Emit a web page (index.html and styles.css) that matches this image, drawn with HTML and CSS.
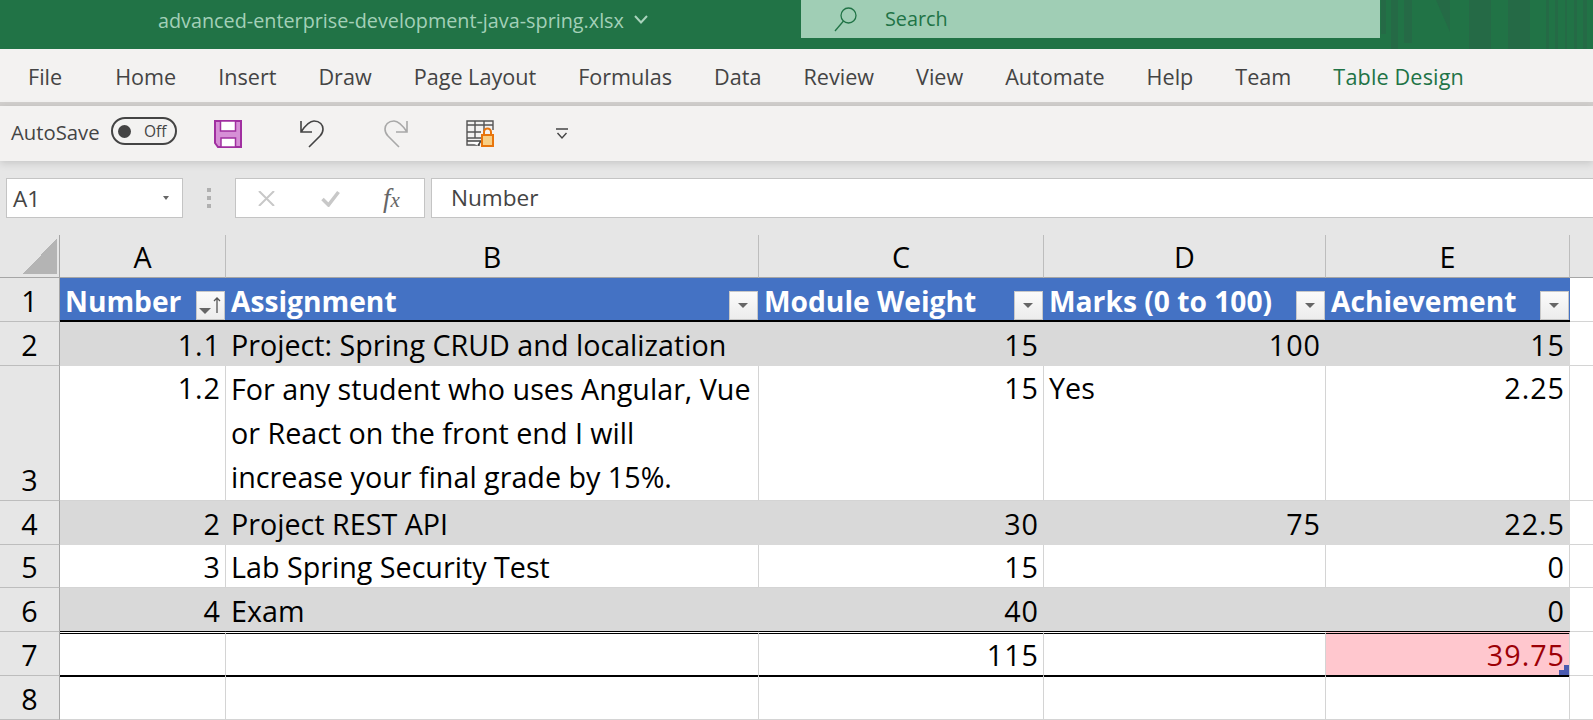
FILE: index.html
```html
<!DOCTYPE html>
<html lang="en">
<head>
<meta charset="UTF-8">
<title>advanced-enterprise-development-java-spring.xlsx</title>
<link rel="stylesheet" href="styles.css">
</head>
<body>
  <div class="titlebar">
    <div class="doc-name">advanced-enterprise-development-java-spring.xlsx<svg class="doc-chevron" width="14" height="9" viewBox="0 0 14 9"><path d="M1 1l6 6.500L13 1" fill="none" stroke="#a9d3bc" stroke-width="2"/></svg></div>
    <div class="search">
      <svg width="26" height="28" viewBox="0 0 26 28"><circle cx="15.500" cy="10.500" r="7.500" fill="none" stroke="#217346" stroke-width="1.300"/><path d="M10.500 16 2 26" stroke="#217346" stroke-width="1.300"/></svg>
      <span>Search</span>
    </div>
    <svg class="stripes" width="213" height="49" viewBox="0 0 213 49" fill="#256a46">
      <rect x="1" y="0" width="5" height="34"/>
      <rect x="11" y="0" width="7" height="49"/>
      <rect x="24" y="0" width="8" height="43"/>
      <path d="M56 0h14v32z"/>
      <rect x="89" y="0" width="22" height="49"/>
      <rect x="128" y="0" width="22" height="49"/>
      <rect x="166" y="0" width="3" height="49"/>
      <rect x="175" y="0" width="3" height="49"/>
      <rect x="185" y="0" width="2" height="49"/>
      <rect x="194" y="0" width="3" height="49"/>
      <rect x="203" y="0" width="4" height="49"/>
    </svg>
  </div>

  <div class="tabs">
    <span class="tab tab-file">File</span>
    <span class="tab">Home</span>
    <span class="tab">Insert</span>
    <span class="tab">Draw</span>
    <span class="tab">Page Layout</span>
    <span class="tab">Formulas</span>
    <span class="tab">Data</span>
    <span class="tab">Review</span>
    <span class="tab">View</span>
    <span class="tab">Automate</span>
    <span class="tab">Help</span>
    <span class="tab">Team</span>
    <span class="tab tab-green">Table Design</span>
  </div>

  <div class="qat">
    <span class="autosave">AutoSave</span>
    <span class="toggle"><i class="toggle-dot"></i>Off</span>
    <svg class="qat-save" width="28" height="28" viewBox="0 0 28 28"><path d="M1 1h26v26H4l-3-4z" fill="#d68fd6" stroke="#a02fa0" stroke-width="2"/><rect x="6.500" y="1" width="15" height="10" fill="#fff" stroke="#a02fa0" stroke-width="1.500"/><rect x="7" y="18" width="14.500" height="9" fill="#fff" stroke="#a02fa0" stroke-width="1.500"/></svg>
    <svg class="qat-undo" width="26" height="30" viewBox="0 0 26 30"><path d="M2 2v11h11M2 13C6 7 10 2 15 2c6 0 9 4 9 8 0 3-1 5-3 7L10 28" fill="none" stroke="#444" stroke-width="1.600"/></svg>
    <svg class="qat-redo" width="26" height="30" viewBox="0 0 26 30"><path d="M24 2v11H13M24 13C20 7 16 2 11 2 5 2 2 6 2 10c0 3 1 5 3 7l11 11" fill="none" stroke="#a8a8a8" stroke-width="1.600"/></svg>
    <svg class="qat-table" width="28" height="27" viewBox="0 0 28 27"><path d="M1 1h26v4H1zM1 5v20h13M1 12h14M1 18h14M9 1v17M18 1v10M27 1v9" fill="none" stroke="#555" stroke-width="1.400"/><path d="M1 21h14l-3 4.500" fill="#fff" stroke="#444" stroke-width="1.400"/><path d="M18 15v-3a3.500 3.500 0 0 1 7 0v3" fill="none" stroke="#e8750c" stroke-width="2"/><rect x="16" y="15" width="11" height="11" fill="#f8cf85" stroke="#e8750c" stroke-width="2"/></svg>
    <svg class="qat-more" width="14" height="12" viewBox="0 0 14 12"><path d="M1 1h12" stroke="#444" stroke-width="1.500"/><path d="M2.500 5 7 10l4.500-5" fill="none" stroke="#444" stroke-width="1.400"/></svg>
  </div>

  <div class="formula-bar">
    <div class="name-box">A1<span class="name-arrow"></span></div>
    <div class="grip"><i></i><i></i><i></i></div>
    <div class="fx-box">
      <svg class="fx-cancel" width="17" height="15" viewBox="0 0 17 15"><path d="M1 0l15 15M16 0 1 15" stroke="#c8c8c8" stroke-width="2"/></svg>
      <svg class="fx-ok" width="19" height="17" viewBox="0 0 19 17"><path d="M1.500 9l6 6L17.500 2" fill="none" stroke="#c8c8c8" stroke-width="3.500"/></svg>
      <span class="fx"><b>f</b>x</span>
    </div>
    <div class="formula-input">Number</div>
  </div>

  <div class="sheet">
    <div class="corner"><i></i></div>
    <div class="col-head">A</div>
    <div class="col-head">B</div>
    <div class="col-head">C</div>
    <div class="col-head">D</div>
    <div class="col-head">E</div>
    <div class="col-rest col-rest-head"></div>

    <div class="row-head">1</div>
    <div class="cell th">Number<span class="filter sorted"><i class="tri"></i><svg class="up" width="8" height="16" viewBox="0 0 8 16"><path d="M4 16V1M1 4l3-3 3 3" fill="none" stroke="#555" stroke-width="1.300"/></svg></span></div>
    <div class="cell th">Assignment<span class="filter"><i class="tri"></i></span></div>
    <div class="cell th">Module Weight<span class="filter"><i class="tri"></i></span></div>
    <div class="cell th">Marks (0 to 100)<span class="filter"><i class="tri"></i></span></div>
    <div class="cell th">Achievement<span class="filter"><i class="tri"></i></span></div>
    <div class="col-rest"></div>

    <div class="row-head">2</div>
    <div class="cell band num">1.1</div>
    <div class="cell band">Project: Spring CRUD and localization</div>
    <div class="cell band num">15</div>
    <div class="cell band num">100</div>
    <div class="cell band num">15</div>
    <div class="col-rest"></div>

    <div class="row-head">3</div>
    <div class="cell num top">1.2</div>
    <div class="cell wrap">For any student who uses Angular, Vue<br>or React on the front end I will<br>increase your final grade by 15%.</div>
    <div class="cell num top">15</div>
    <div class="cell top">Yes</div>
    <div class="cell num top">2.25</div>
    <div class="col-rest"></div>

    <div class="row-head">4</div>
    <div class="cell band num">2</div>
    <div class="cell band">Project REST API</div>
    <div class="cell band num">30</div>
    <div class="cell band num">75</div>
    <div class="cell band num">22.5</div>
    <div class="col-rest"></div>

    <div class="row-head">5</div>
    <div class="cell num">3</div>
    <div class="cell">Lab Spring Security Test</div>
    <div class="cell num">15</div>
    <div class="cell"></div>
    <div class="cell num">0</div>
    <div class="col-rest"></div>

    <div class="row-head">6</div>
    <div class="cell band num">4</div>
    <div class="cell band">Exam</div>
    <div class="cell band num">40</div>
    <div class="cell band"></div>
    <div class="cell band num">0</div>
    <div class="col-rest"></div>

    <div class="row-head">7</div>
    <div class="cell total"></div>
    <div class="cell total"></div>
    <div class="cell total num">115</div>
    <div class="cell total"></div>
    <div class="cell total num bad">39.75<i class="resize"></i></div>
    <div class="col-rest"></div>

    <div class="row-head">8</div>
    <div class="cell"></div>
    <div class="cell"></div>
    <div class="cell"></div>
    <div class="cell"></div>
    <div class="cell"></div>
    <div class="col-rest"></div>
  </div>
</body>
</html>
```

FILE: styles.css
```css
* {
  box-sizing: border-box;
}
html, body {
  height: 720px;
  overflow: hidden;
}
body {
  margin: 0;
  background-color: #fff;
  font-family: "Open Sans", "Noto Sans", sans-serif;
  color: #444;
}

/* title bar */
.titlebar {
  height: 49px;
  background-color: #217346;
  display: flex;
  align-items: flex-start;
}
.doc-name {
  width: 801px;
  padding: 9px 0 0 158px;
  font-size: 19.8px;
  line-height: 24px;
  color: #a3d0b8;
  white-space: nowrap;
}
.doc-chevron {
  margin-left: 10px;
  vertical-align: 4px;
}
.search {
  width: 579px;
  height: 38px;
  background-color: #a0ceb5;
  display: flex;
  align-items: center;
  padding: 0 0 1px 32px;
  font-size: 19.8px;
  color: #217346;
}
.search svg {
  margin-right: 26px;
}
.stripes {
  flex: none;
}

/* ribbon tabs */
.tabs {
  height: 57px;
  background-color: #f3f2f1;
  border-bottom: 4px solid #d2d0ce;
  display: flex;
  align-items: center;
  padding: 2px 0 0 28px;
  font-size: 21.6px;
  gap: 42px;
}
.tab {
  white-space: nowrap;
}
.tab-file {
  margin-right: 11px;
}
.tab-green {
  color: #217346;
  letter-spacing: 0.15px;
}

/* quick access toolbar */
.qat {
  height: 55px;
  background-color: #f3f2f1;
  display: flex;
  align-items: center;
  box-shadow: 0 2px 8px rgba(0, 0, 0, 0.15);
  position: relative;
  padding-left: 11px;
}
.autosave {
  font-size: 20.3px;
  width: 100px;
  margin-bottom: 4px;
  white-space: nowrap;
}
.toggle {
  width: 66px;
  height: 28px;
  border: 2px solid #444;
  border-radius: 14px;
  margin-bottom: 5px;
  display: flex;
  align-items: center;
  padding-left: 5px;
  font-size: 15.5px;
}
.toggle-dot {
  width: 13px;
  height: 13px;
  border-radius: 50%;
  background-color: #444;
  margin-right: 13px;
}
.qat-save {
  margin-left: 37px;
}
.qat-undo {
  margin-left: 57px;
}
.qat-redo {
  margin-left: 58px;
}
.qat-table {
  margin-left: 57px;
}
.qat-more {
  margin-left: 61px;
}

/* formula bar */
.formula-bar {
  height: 74px;
  background-color: #e6e6e6;
  display: flex;
  align-items: flex-start;
  padding: 17px 0 0 6px;
}
.name-box {
  width: 177px;
  height: 40px;
  background-color: #fff;
  border: 1px solid #c4c4c4;
  display: flex;
  align-items: center;
  justify-content: space-between;
  padding: 0 13px 0 6px;
  font-size: 22.6px;
}
.name-arrow {
  border: 3.500px solid transparent;
  border-top: 4px solid #666;
  border-bottom: 0;
}
.grip {
  width: 52px;
  height: 40px;
  display: flex;
  flex-direction: column;
  align-items: center;
  justify-content: center;
  gap: 4px;
}
.grip i {
  width: 4px;
  height: 4px;
  background-color: #b0b0b0;
}
.fx-box {
  width: 190px;
  height: 40px;
  background-color: #fff;
  border: 1px solid #c4c4c4;
  display: flex;
  align-items: center;
  padding-left: 22px;
}
.fx-ok {
  margin-left: 46px;
}
.fx {
  margin-left: 43px;
  font-family: "Liberation Serif", serif;
  font-style: italic;
  font-size: 21px;
  color: #666;
}
.fx b {
  font-weight: normal;
  font-size: 27px;
}
.formula-input {
  flex: 1;
  margin-left: 6px;
  height: 40px;
  background-color: #fff;
  border: 1px solid #c4c4c4;
  border-right: 0;
  padding-left: 19px;
  line-height: 38px;
  font-size: 22.6px;
}

/* sheet */
.sheet {
  height: 485px;
  display: grid;
  grid-template-columns: 60px 166px 533px 285px 282px 244px 23px;
  grid-template-rows: 43px 44px 44px 135px 44px 43px 44px 44px 44px;
  font-size: 28.7px;
  color: #000;
  background-color: #fff;
}
.corner {
  background-color: #e6e6e6;
  border-right: 1px solid #a6a6a6;
  border-bottom: 1px solid #a6a6a6;
  padding: 4px 0 0 22px;
}
.corner i {
  display: block;
  width: 35px;
  height: 35px;
  background: linear-gradient(135deg, transparent 50%, #b4b4b4 50%);
}
.col-head {
  background-color: #e6e6e6;
  border-right: 1px solid #bdbdbd;
  border-bottom: 1px solid #a6a6a6;
  display: flex;
  align-items: center;
  justify-content: center;
  padding-top: 1px;
}
.row-head {
  background-color: #e6e6e6;
  border-right: 1px solid #a6a6a6;
  border-bottom: 1px solid #bdbdbd;
  display: flex;
  align-items: flex-end;
  justify-content: center;
  line-height: 40px;
}
.col-rest {
  border-bottom: 1px solid #d4d4d4;
}
.col-rest-head {
  background-color: #e6e6e6;
  border-bottom-color: #a6a6a6;
}
.cell {
  border-right: 1px solid #d4d4d4;
  border-bottom: 1px solid #d4d4d4;
  padding: 0 5px 0 5px;
  line-height: 41px;
  white-space: nowrap;
  overflow: hidden;
  position: relative;
  display: flex;
  align-items: flex-end;
}
.th {
  background-color: #4472c4;
  color: #fff;
  font-weight: bold;
  font-size: 28.2px;
  line-height: 37px;
  border-right: 0;
  border-bottom: 2px solid #000;
}
.num {
  justify-content: flex-end;
  letter-spacing: 1px;
  padding-right: 4px;
}
.top {
  align-items: flex-start;
  line-height: 44px;
}
.band {
  background-color: #d9d9d9;
  border-right-color: #d9d9d9;
  border-bottom-color: #d9d9d9;
}
.wrap {
  display: block;
  padding-top: 1px;
  line-height: 44px;
}
.total {
  border-top: 3px double #000;
  border-bottom: 2px solid #000;
  margin: -1px 0;
}
.bad {
  background-color: #ffc7ce;
  color: #9c0006;
}
.resize {
  position: absolute;
  right: 0;
  bottom: 0;
  width: 10px;
  height: 10px;
  background-color: #4a5bb0;
  clip-path: polygon(50% 0, 100% 0, 100% 100%, 0 100%, 0 50%, 50% 50%);
}
.filter {
  position: absolute;
  right: 1px;
  bottom: 0;
  width: 29px;
  height: 29px;
  background: linear-gradient(#fbfbfb, #ececec);
  border: 1px solid #c8c8c8;
}
.filter .tri {
  position: absolute;
  left: 8px;
  top: 11px;
  border: 5px solid transparent;
  border-top: 5px solid #666;
  border-bottom: 0;
}
.sorted .tri {
  left: 2px;
  top: 16px;
  border-width: 6px 6px 0;
}
.sorted .up {
  position: absolute;
  left: 16px;
  top: 5px;
}
```
